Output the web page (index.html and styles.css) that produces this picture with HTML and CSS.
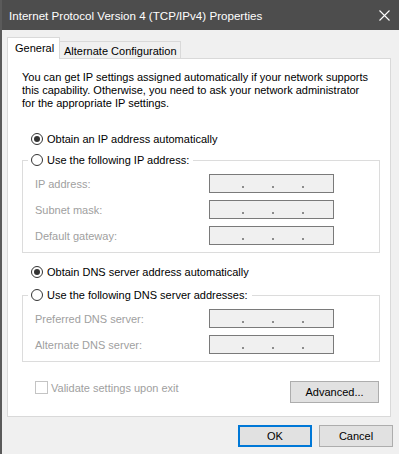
FILE: index.html
```html
<!DOCTYPE html>
<html lang="en">
<head>
  <meta charset="UTF-8">
  <meta name="viewport" content="width=device-width, initial-scale=1.0">
  <title>Internet Protocol Version 4 (TCP/IPv4) Properties</title>
  <link rel="stylesheet" href="styles.css">
</head>
<body>
  <div class="window">
    <div class="titlebar">
      <span class="title">Internet Protocol Version 4 (TCP/IPv4) Properties</span>
      <svg class="close" width="11" height="11" viewBox="0 0 11 11">
        <path d="M0.5 0.5 L10.5 10.5 M10.5 0.5 L0.5 10.5" stroke="#fff" stroke-width="1.1" fill="none"/>
      </svg>
    </div>

    <div class="content">
      <div class="tabs">
        <div class="tab active">General</div>
        <div class="tab">Alternate Configuration</div>
      </div>

      <div class="panel">
        <p class="intro">You can get IP settings assigned automatically if your network supports<br>this capability. Otherwise, you need to ask your network administrator<br>for the appropriate IP settings.</p>

        <!-- IP address -->
        <div class="option first">
          <span class="radio checked"></span>
          <span>Obtain an IP address automatically</span>
        </div>
        <div class="group ip-group">
          <div class="legend">
            <span class="radio"></span>
            <span>Use the following IP address:</span>
          </div>
          <div class="field">
            <span class="label">IP address:</span>
            <div class="ip-box"><i></i><i></i><i></i></div>
          </div>
          <div class="field">
            <span class="label">Subnet mask:</span>
            <div class="ip-box"><i></i><i></i><i></i></div>
          </div>
          <div class="field">
            <span class="label">Default gateway:</span>
            <div class="ip-box"><i></i><i></i><i></i></div>
          </div>
        </div>

        <!-- DNS -->
        <div class="option dns">
          <span class="radio checked"></span>
          <span>Obtain DNS server address automatically</span>
        </div>
        <div class="group dns-group">
          <div class="legend">
            <span class="radio"></span>
            <span>Use the following DNS server addresses:</span>
          </div>
          <div class="field">
            <span class="label">Preferred DNS server:</span>
            <div class="ip-box"><i></i><i></i><i></i></div>
          </div>
          <div class="field">
            <span class="label">Alternate DNS server:</span>
            <div class="ip-box"><i></i><i></i><i></i></div>
          </div>
        </div>

        <div class="panel-footer">
          <div class="validate">
            <span class="checkbox"></span>
            <span>Validate settings upon exit</span>
          </div>
          <div class="button advanced">Advanced...</div>
        </div>
      </div>

      <div class="dialog-buttons">
        <div class="button default">OK</div>
        <div class="button">Cancel</div>
      </div>
    </div>
  </div>
</body>
</html>
```

FILE: styles.css
```css
/* Windows 10 style dialog colours */
:root {
  --title-bg: #4d4d4d;
  --window-bg: #f0f0f0;
  --panel-border: #d9d9d9;
  --group-border: #dcdcdc;
  --disabled-text: #a0a0a0;
  --control-border: #333333;
  --button-bg: #e1e1e1;
  --button-border: #adadad;
  --accent: #0078d7;
}

* {
  margin: 0;
  padding: 0;
  box-sizing: border-box;
}

body {
  font-family: "Liberation Sans", Arial, sans-serif;
  font-size: 11px;
  color: #000;
  background: #fff;
}

.window {
  width: 399px;
  height: 454px;
  background: var(--window-bg);
  border-left: 2px solid #5a5a5a;
  display: flex;
  flex-direction: column;
  overflow: hidden;
}

/* Title bar */
.titlebar {
  height: 30px;
  flex-shrink: 0;
  background: var(--title-bg);
  color: #fff;
  display: flex;
  align-items: center;
  padding: 0 9px 0 7px;
}

.title {
  font-size: 11.6px;
  flex: 1;
}

.close {
  display: block;
  margin-right: 0;
}

/* Main area */
.content {
  padding: 7px 6px 0 5px;
  display: flex;
  flex-direction: column;
}

.tabs {
  display: flex;
  align-items: flex-end;
  height: 21px;
  position: relative;
  z-index: 1;
}

.tab {
  height: 17px;
  width: 121px;
  border: 1px solid var(--panel-border);
  border-left: none;
  border-bottom: none;
  background: var(--window-bg);
  display: flex;
  align-items: center;
  padding-left: 4px;
  padding-top: 1px;
}

.tab.active {
  height: 22px;
  width: 53px;
  margin-bottom: -1px;
  border-left: 1px solid var(--panel-border);
  background: #fff;
  padding-left: 7px;
  padding-top: 0;
  padding-bottom: 1px;
}

.panel {
  width: 384px;
  height: 359px;
  background: #fff;
  border: 1px solid var(--panel-border);
  padding: 12px 10px 0 14px;
}

.intro {
  line-height: 13px;
}

/* Radio options */
.option, .legend {
  display: flex;
  align-items: center;
  height: 16px;
}

.option {
  padding-left: 9px;
}

.option.first {
  margin-top: 21px;
}

.option.dns {
  margin-top: 11px;
}

.radio {
  width: 12px;
  height: 12px;
  border: 1px solid var(--control-border);
  border-radius: 50%;
  background: #fff;
  margin-right: 4px;
  display: flex;
  align-items: center;
  justify-content: center;
  flex-shrink: 0;
}

.radio.checked::after {
  content: "";
  width: 6px;
  height: 6px;
  border-radius: 50%;
  background: var(--control-border);
}

/* Group boxes */
.group {
  border: 1px solid var(--group-border);
  padding: 0 0 7px 12px;
  display: flex;
  flex-direction: column;
  gap: 7px;
}

.ip-group {
  margin-top: 13px;
}

.dns-group {
  margin-top: 15px;
}

.legend {
  align-self: flex-start;
  margin: -9px 0 -1px -7px;
  padding: 0 4px 0 3px;
  background: #fff;
}

.field {
  display: flex;
  align-items: center;
  height: 19px;
}

.label {
  width: 174px;
  color: var(--disabled-text);
}

.ip-box {
  width: 125px;
  height: 19px;
  border: 1px solid #7a7a7a;
  background: var(--window-bg);
  display: flex;
  align-items: flex-start;
  gap: 28px;
  padding: 11px 0 0 32px;
}

.ip-box i {
  width: 2px;
  height: 2px;
  background: #8c8c8c;
}

/* Footer of the tab */
.panel-footer {
  display: flex;
  align-items: flex-start;
  margin-top: 19px;
  padding-left: 13px;
}

.validate {
  display: flex;
  align-items: center;
  height: 13px;
  color: var(--disabled-text);
}

.checkbox {
  width: 13px;
  height: 13px;
  border: 1px solid #c4c4c4;
  background: #fff;
  margin-right: 3px;
}

.button {
  height: 22px;
  width: 74px;
  background: var(--button-bg);
  border: 1px solid var(--button-border);
  display: flex;
  align-items: center;
  justify-content: center;
}

.button.advanced {
  width: 89px;
  margin-left: auto;
  margin-right: 1px;
}

.button.default {
  border-color: var(--accent);
  box-shadow: inset 0 0 0 1px var(--accent);
}

.dialog-buttons {
  display: flex;
  justify-content: flex-end;
  gap: 7px;
  margin-top: 8px;
}
```
